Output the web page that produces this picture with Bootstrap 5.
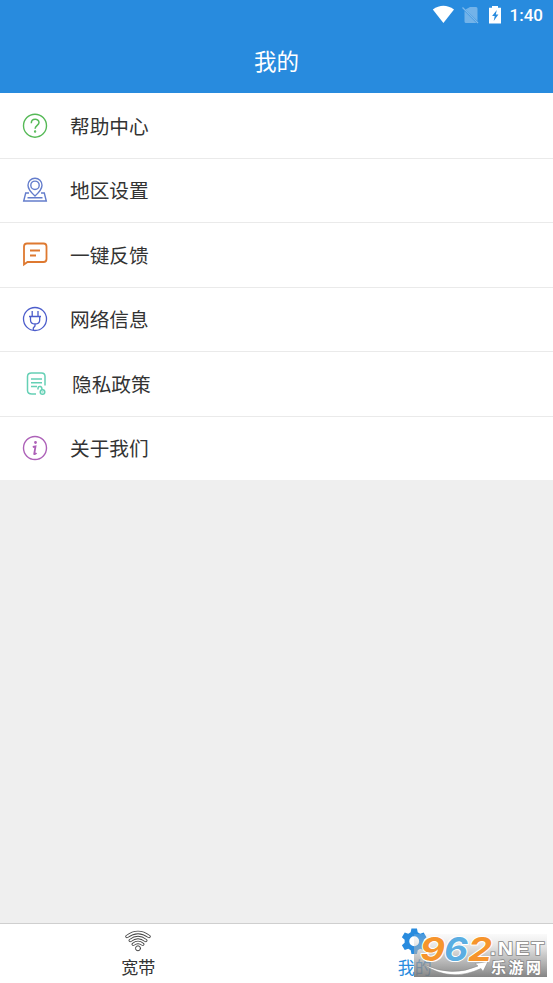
<!DOCTYPE html>
<html lang="zh-CN">
<head>
<meta charset="utf-8">
<meta name="viewport" content="width=device-width, initial-scale=1">
<title>我的</title>
<link href="https://cdn.jsdelivr.net/npm/bootstrap@5.3.0/dist/css/bootstrap.min.css" rel="stylesheet">
<style>
body{font-family:"Noto Sans CJK SC",sans-serif;background:#efefef;color:#333}
.app-top{background:#288bde;height:93px}
.status-line{height:30px;padding-right:10px;font:500 17px/30px Roboto,sans-serif}
.page-title{font-size:22.5px;line-height:32px;font-weight:400;margin-top:14px}
.menu-list{padding-top:1px;background:#fff}
.menu-row{height:64.5px;padding:0 0 0 21px;border:0;border-bottom:1px solid #eaeaea;color:#333;font-size:19.7px;line-height:28px}
.menu-row:last-child{border-bottom:0;height:63.500px}
.menu-row svg{width:28px;height:28px;margin-right:21px;flex:none}
.menu-row.wide-gap svg{margin-right:23px}
.tab-strip{height:60px;border-top:1px solid #cfcfcf}
.tab-item{font-size:17px;line-height:24px;color:#333;padding-top:4px}
.tab-item.current{color:#288bde}
.site-badge{right:6px;bottom:6px;width:133px;height:43px}
svg{display:block}
</style>
<script src="https://cdn.jsdelivr.net/npm/bootstrap@5.3.0/dist/js/bootstrap.bundle.min.js"></script>
</head>
<body>
<div class="d-flex flex-column vh-100 position-relative overflow-hidden">
<header class="app-top text-white flex-shrink-0">
  <div class="status-line d-flex justify-content-end align-items-center">
    <svg width="80" height="30" viewBox="0 0 80 30">
      <path d="M2.800 9.500Q13.400 2 24 9.500L13.400 23Z" fill="#fff"/>
      <path d="M40 7h6q1.500 0 1.500 1.500V21L35.500 9.500zM34.500 11l12 12h-10.500q-1.500 0-1.500-1.500z" fill="#fff" opacity=".35"/>
      <path d="M32.500 7.500l15.500 15.500" stroke="#fff" stroke-width="1.300" opacity=".4"/>
      <path d="M59 7.800h3V6h6v1.800h3v15.700H59z" fill="#fff"/>
      <path d="M66.800 10l-4.700 6h2.600l-1 5 4.700-6.500h-2.600z" fill="#288bde"/>
    </svg>
    <span>1:40</span>
  </div>
  <h1 class="page-title text-center mb-0">我的</h1>
</header>
<main class="flex-grow-1">
  <div class="menu-list list-group list-group-flush">
    <a class="menu-row list-group-item d-flex align-items-center">
      <svg viewBox="0 0 28 28" fill="none" stroke="#55b956" stroke-width="1.400"><circle cx="14" cy="13.700" r="11.500"/><path d="M10.300 11.200c0-5.300 7.700-5 7.700-.6 0 2.700-3.900 3-3.900 6.200" stroke-width="1.500"/><circle cx="14.100" cy="19.500" r=".5"/></svg>
      <span>帮助中心</span></a>
    <a class="menu-row list-group-item d-flex align-items-center">
      <svg viewBox="0 0 28 28" fill="none" stroke="#647dcc" stroke-width="1.400"><path d="M14 20C10 16.500 7 13.500 7 9.300a7 7 0 0114 0c0 4.200-3 7.200-7 10.700z"/><circle cx="14" cy="9.300" r="4.200"/><path d="M8 17H4.700L2.700 25h22.600l-2-8H20M6.500 21.800h15"/></svg>
      <span>地区设置</span></a>
    <a class="menu-row list-group-item d-flex align-items-center">
      <svg viewBox="0 0 28 28" fill="none" stroke="#de7930" stroke-width="1.800"><path d="M3 23.500V5.500q0-3 3-3h16.500q3 0 3 3V18q0 3-3 3H6.500z"/><path d="M9 9.500h10M9 14.500h6"/></svg>
      <span>一键反馈</span></a>
    <a class="menu-row list-group-item d-flex align-items-center">
      <svg viewBox="0 0 28 28" fill="none" stroke="#4c5dcb" stroke-width="1.300"><circle cx="14" cy="14" r="11.500"/><path d="M11.200 6v5M17 6v5M8 11.500h12M9.500 11.500v3.500q0 4 4.600 4t4.600-4v-3.500M14 19v2l-1.700 2v2"/></svg>
      <span>网络信息</span></a>
    <a class="menu-row wide-gap list-group-item d-flex align-items-center">
      <svg viewBox="0 0 28 28" fill="none" stroke="#65d0b5" stroke-width="1.500"><path d="M15 24h-4q-4.500 0-4.500-3.500V6.500q0-3.500 4-3.500h10q3.500 0 3.500 3.500v9M10 9h11M10 12.700h11M10 16.500h6"/><path d="M17 19.500v-1.200q.4-2.300 2.500-1.800 1.500.4 1.500 3.500"/><circle cx="21.500" cy="22" r="2.300"/><circle cx="21.500" cy="22" r=".2"/></svg>
      <span>隐私政策</span></a>
    <a class="menu-row list-group-item d-flex align-items-center">
      <svg viewBox="0 0 28 28" fill="none" stroke="#ad61b8" stroke-width="1.400"><circle cx="14" cy="14" r="11.500"/><circle cx="14.500" cy="8.500" r=".7" fill="#ad61b8"/><path d="M11.800 13l2.700-.6-1.300 7.600q1 .5 2.300-1" stroke-width="1.800"/></svg>
      <span>关于我们</span></a>
  </div>
</main>
<nav class="tab-strip bg-white flex-shrink-0"><div class="row g-0 text-center">
  <a class="tab-item col-6 text-decoration-none">
    <svg class="mx-auto" width="28" height="27" viewBox="0 0 28 27" fill="none" stroke-linecap="round">
      <g stroke="#444" stroke-width="3.400"><path d="M3 8.500q11-8.200 22 0M6.300 12.500q7.700-6 15.400 0M9.300 16.300q4.700-3.800 9.400 0"/></g>
      <g stroke="#fff" stroke-width="1.600"><path d="M3 8.500q11-8.200 22 0M6.300 12.500q7.700-6 15.400 0M9.300 16.300q4.700-3.800 9.400 0"/></g>
      <circle cx="14" cy="20.300" r="2.500" fill="#fff" stroke="#444" stroke-width="1"/></svg>
    <span class="d-block">宽带</span></a>
  <a class="tab-item current col-6 text-decoration-none">
    <svg class="mx-auto" width="28" height="27" viewBox="0 0 28 27"><path transform="translate(-2.200 -.5) scale(1.100)" fill="#288bde" fill-rule="evenodd" d="M11.500 1h5l.7 3.300 2.200 1.300 3.200-1.100 2.600 4.400-2.500 2.300v2.600l2.500 2.300-2.600 4.400-3.200-1.100-2.200 1.300-.7 3.300h-5l-.7-3.300-2.200-1.300-3.200 1.100-2.600-4.400 2.500-2.300v-2.600L2.800 8.900l2.600-4.400 3.200 1.100 2.200-1.300zM14 8a4.500 4.500 0 100 9 4.500 4.500 0 000-9z"/></svg>
    <span class="d-block">我的</span></a>
</div></nav>
<div class="site-badge position-absolute">
  <svg width="133" height="43" viewBox="0 0 133 43" overflow="visible">
    <defs><linearGradient id="shade" x2="0" y2="1"><stop stop-color="#ddd" stop-opacity=".15"/><stop offset=".5" stop-color="#aaa" stop-opacity=".65"/><stop offset="1" stop-color="#777" stop-opacity=".9"/></linearGradient></defs>
    <path fill="url(#shade)" d="M0 0h133v43H0z"/>
    <path d="M9 30q28 14 55 2l-3-2.500 13-2-5 10-2-3Q36 49 9 30z" fill="#fff" stroke="#888" stroke-width=".5"/>
    <g font-family="Inter" font-weight="700" font-style="italic" font-size="33" stroke="#fff" stroke-width="2" paint-order="stroke" stroke-linejoin="round">
      <text x="6" y="26.500" textLength="25" lengthAdjust="spacingAndGlyphs" fill="#f6952d">9</text>
      <text x="30" y="26.500" textLength="24" lengthAdjust="spacingAndGlyphs" fill="#5baee2">6</text>
      <text x="54" y="26.500" textLength="24" lengthAdjust="spacingAndGlyphs" fill="#f6952d">2</text></g>
    <g fill="#fff" stroke="#888" stroke-width="1.500" paint-order="stroke" font-weight="700">
      <text transform="translate(76 20.500) scale(1.180 1)" font-family="Liberation Sans" font-size="18" textLength="46" lengthAdjust="spacing">.NET</text>
      <text x="77" y="38.500" font-family="Noto Sans CJK SC" font-size="15" textLength="50">乐游网</text></g>
  </svg>
</div>
</div>
</body>
</html>
